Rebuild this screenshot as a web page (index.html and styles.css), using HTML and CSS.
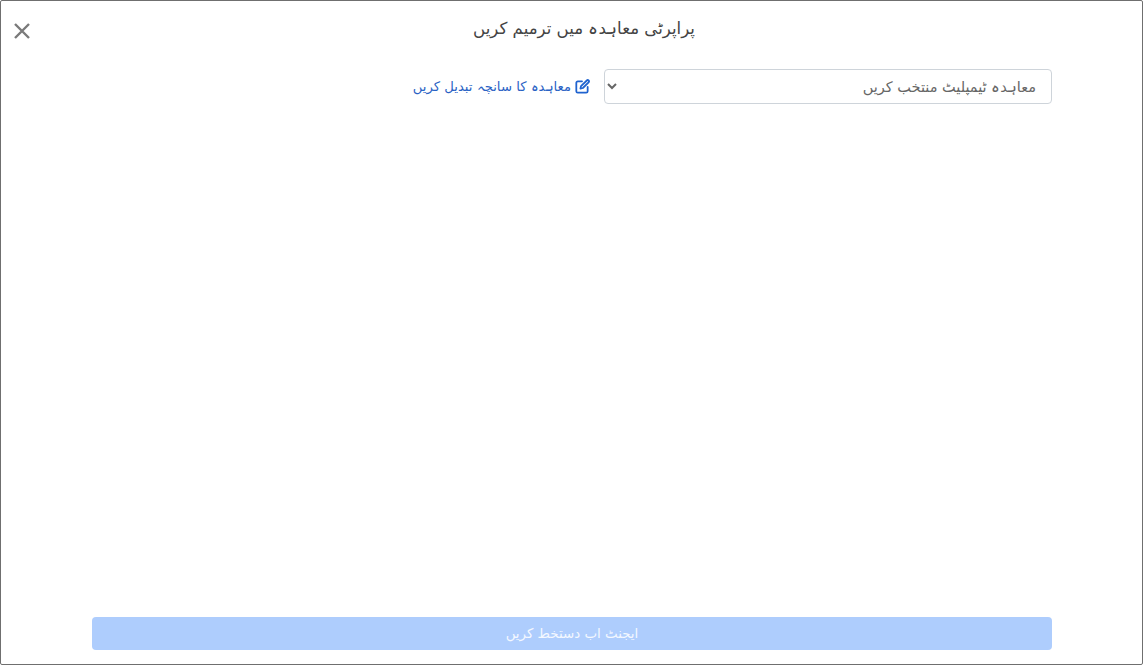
FILE: index.html
```html
<!DOCTYPE html>
<html lang="ur" dir="rtl">
<head>
  <meta charset="UTF-8" />
  <meta name="viewport" content="width=device-width, initial-scale=1.0"/>
  <title>پراپرٹی معاہدہ</title>
  <link rel="stylesheet" href="styles.css">
</head>
<body>
<div class="modal">
  <div class="modal-header">
    <h1 class="modal-title">پراپرٹی معاہدہ میں ترمیم کریں</h1>
    <button class="close-btn" aria-label="Close">
      <svg width="18" height="18" viewBox="0 0 18 18" fill="none" stroke="#7a7a7a" stroke-width="2.4">
        <path d="M2 2 L16 16 M16 2 L2 16"/>
      </svg>
    </button>
  </div>

  <div class="modal-body">
    <div class="template-row">
      <select class="template-select">
        <option>معاہدہ ٹیمپلیٹ منتخب کریں</option>
      </select>
      <a href="#" class="change-link">
        <svg width="15" height="15" viewBox="0 0 16 16" fill="none" stroke="#1f63cf" stroke-width="1.9" stroke-linecap="round" stroke-linejoin="round">
          <path d="M7.5 2.5 H3 a1.6 1.6 0 0 0 -1.6 1.6 V13 a1.6 1.6 0 0 0 1.6 1.6 h8.9 a1.6 1.6 0 0 0 1.6 -1.6 V8.5"/>
          <path d="M12.6 1.6 a1.3 1.3 0 0 1 1.9 1.9 L8.4 9.6 L5.8 10.2 L6.4 7.6 Z"/>
        </svg>
        <span>معاہدہ کا سانچہ تبدیل کریں</span>
      </a>
    </div>
  </div>

  <div class="modal-footer">
    <button class="sign-btn" disabled>ایجنٹ اب دستخط کریں</button>
  </div>
</div>
</body>
</html>
```

FILE: styles.css
```css
* { margin: 0; padding: 0; box-sizing: border-box; }

html, body {
  height: 100%;
  overflow: hidden;
  background: #fff;
  font-family: "DejaVu Sans", "Noto Sans", sans-serif;
}

.modal {
  height: 665px;
  display: flex;
  flex-direction: column;
  border: 1px solid #6f6f6f;
  border-radius: 2px;
  background: #fff;
}

.modal-header {
  position: relative;
  height: 68px;
  padding-top: 16px;
  padding-left: 25px;
  text-align: center;
}

.modal-title {
  font-size: 16.6px;
  font-weight: normal;
  line-height: 24px;
  color: #444;
}

.close-btn {
  position: absolute;
  left: 12px;
  top: 21px;
  width: 18px;
  height: 18px;
  border: none;
  background: none;
}

.modal-body {
  flex: 1;
  padding: 0 90px;
}

.template-row {
  display: flex;
  align-items: center;
  gap: 14px;
}

.template-select {
  width: 448px;
  height: 35px;
  padding: 0 11px;
  border: 1px solid #ced4da;
  border-radius: 4px;
  background: #fff;
  color: #666;
  font-family: inherit;
  font-size: 14.5px;
}

.change-link {
  display: flex;
  align-items: center;
  gap: 4px;
  color: #2a62c4;
  font-size: 13.2px;
  line-height: 20px;
  text-decoration: none;
}

.change-link span {
  padding-top: 1px;
}

.modal-footer {
  padding: 0 90px 14px 91px;
}

.sign-btn {
  display: block;
  width: 100%;
  height: 33px;
  border: none;
  border-radius: 4px;
  background: #aecdfd;
  color: #f4f8ff;
  font-family: inherit;
  font-size: 13.4px;
}
```
